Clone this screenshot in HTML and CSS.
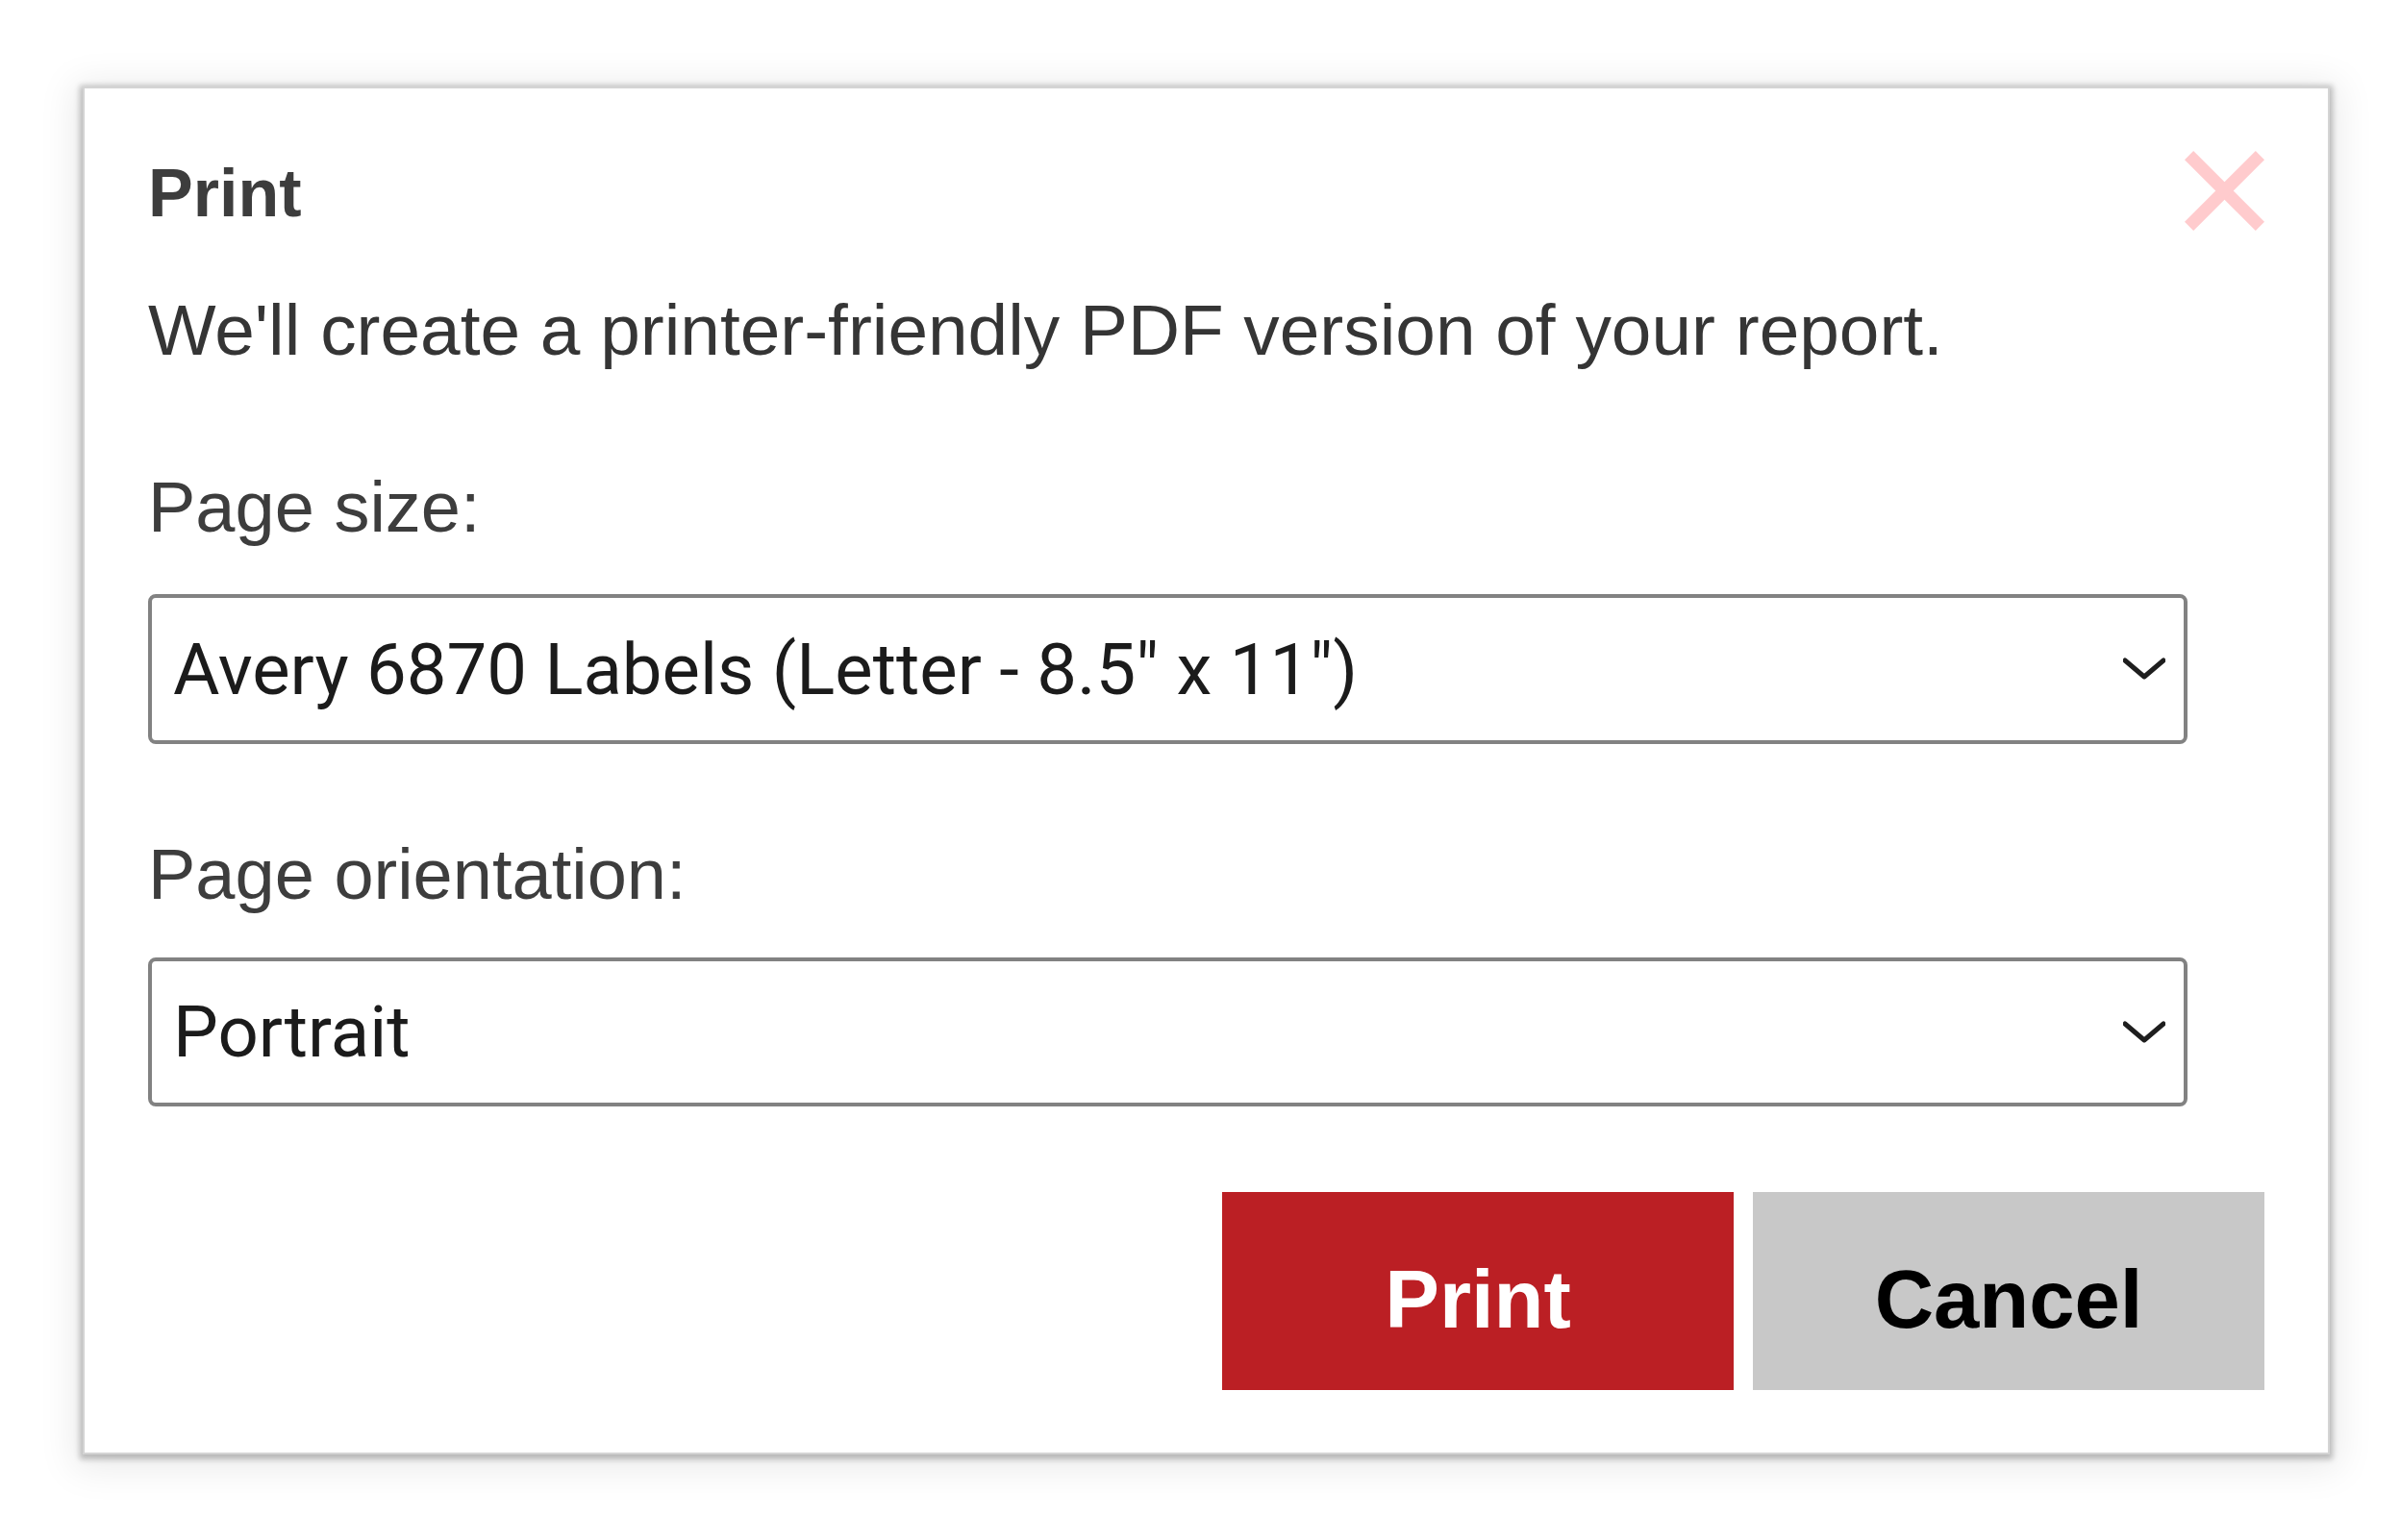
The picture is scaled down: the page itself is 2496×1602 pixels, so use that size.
FILE: index.html
```html
<!DOCTYPE html>
<html lang="en">
<head>
<meta charset="utf-8">
<title>Print</title>
<link rel="stylesheet" href="styles.css">
</head>
<body>
<div class="dialog" role="dialog" aria-labelledby="dlg-title">
  <div class="dialog-header">
    <h2 class="dialog-title" id="dlg-title">Print</h2>
    <button class="close-btn" type="button" aria-label="Close">
      <svg viewBox="0 0 83 83" width="83" height="83" aria-hidden="true">
        <line x1="4.6" y1="4.6" x2="78.4" y2="78.4" />
        <line x1="78.4" y1="4.6" x2="4.6" y2="78.4" />
      </svg>
    </button>
  </div>
  <p class="dialog-desc">We'll create a printer-friendly PDF version of your report.</p>

  <label class="field-label" for="page-size">Page size:</label>
  <div class="select-wrap first">
    <select id="page-size" class="select">
      <option>Avery 6870 Labels (Letter - 8.5" x 11")</option>
    </select>
    <svg class="chevron" viewBox="0 0 44 24" width="44" height="24" aria-hidden="true">
      <polyline points="2,3 22,20 42,3" />
    </svg>
  </div>

  <label class="field-label" for="page-orient">Page orientation:</label>
  <div class="select-wrap second">
    <select id="page-orient" class="select">
      <option>Portrait</option>
    </select>
    <svg class="chevron" viewBox="0 0 44 24" width="44" height="24" aria-hidden="true">
      <polyline points="2,3 22,20 42,3" />
    </svg>
  </div>

  <div class="actions">
    <button class="btn btn-primary" type="button">Print</button>
    <button class="btn btn-secondary" type="button">Cancel</button>
  </div>
</div>
</body>
</html>
```
FILE: styles.css
```css
html, body {
  margin: 0;
  padding: 0;
  background: #ffffff;
}

body {
  box-sizing: border-box;
  min-height: 1602px;
  padding: 92px 0 0 88px;
  font-family: "Liberation Sans", Arial, Helvetica, sans-serif;
}

.dialog {
  box-sizing: border-box;
  width: 2333px;
  background: #ffffff;
  padding: 69px 66px 65px 66px;
  box-shadow: 0 0 0 2px #d4d4d4, 0 2px 6px 5px rgba(0, 0, 0, 0.24), 0 6px 36px 12px rgba(0, 0, 0, 0.08);
  display: flex;
  flex-direction: column;
}

.dialog-header {
  display: flex;
  justify-content: space-between;
  align-items: flex-start;
  height: 80px;
}

.dialog-title {
  margin: 0;
  font-size: 70px;
  line-height: 80px;
  font-weight: bold;
  color: #3d3d3d;
}

.close-btn {
  margin: -4px 0 0 0;
  padding: 0;
  border: 0;
  background: none;
  width: 83px;
  height: 83px;
  display: block;
}

.close-btn svg {
  display: block;
}

.close-btn line {
  stroke: #ffcbcd;
  stroke-width: 13;
  stroke-linecap: butt;
}

.dialog-desc {
  margin: 59px 0 0 0;
  font-size: 74.8px;
  line-height: 86px;
  color: #353535;
}

.field-label {
  display: block;
  margin-top: 99px;
  font-size: 74px;
  line-height: 86px;
  color: #3d3d3d;
}

.select-wrap + .field-label {
  margin-top: 93px;
}

.select-wrap {
  position: relative;
  width: 2121px;
  margin-top: 47px;
}

.select-wrap.second {
  margin-top: 43px;
}

.select {
  appearance: none;
  -webkit-appearance: none;
  box-sizing: border-box;
  display: block;
  width: 100%;
  height: 156px;
  margin: 0;
  padding: 0 90px 0 22px;
  border: 4px solid #828282;
  border-radius: 8px;
  background: #ffffff;
  font-family: Roboto, "Noto Sans", sans-serif;
  font-size: 74.3px;
  color: #1b1b1b;
  outline: none;
}

.select-wrap.second .select {
  height: 155px;
}

.chevron {
  position: absolute;
  right: 23px;
  top: 50%;
  margin-top: -12px;
  pointer-events: none;
}

.chevron polyline {
  fill: none;
  stroke: #1e1e1e;
  stroke-width: 5;
  stroke-linecap: round;
  stroke-linejoin: round;
}

.actions {
  display: flex;
  justify-content: flex-end;
  gap: 20px;
  margin-top: 89px;
}

.btn {
  box-sizing: border-box;
  width: 532px;
  height: 206px;
  margin: 0;
  padding: 16px 0 0 0;
  border: 0;
  border-radius: 0;
  font-family: "Liberation Sans", Arial, Helvetica, sans-serif;
  font-size: 85px;
  font-weight: bold;
  line-height: 1;
}

.btn-primary {
  background: #bb1f24;
  color: #ffffff;
}

.btn-secondary {
  background: #c8c8c8;
  color: #000000;
}
```
